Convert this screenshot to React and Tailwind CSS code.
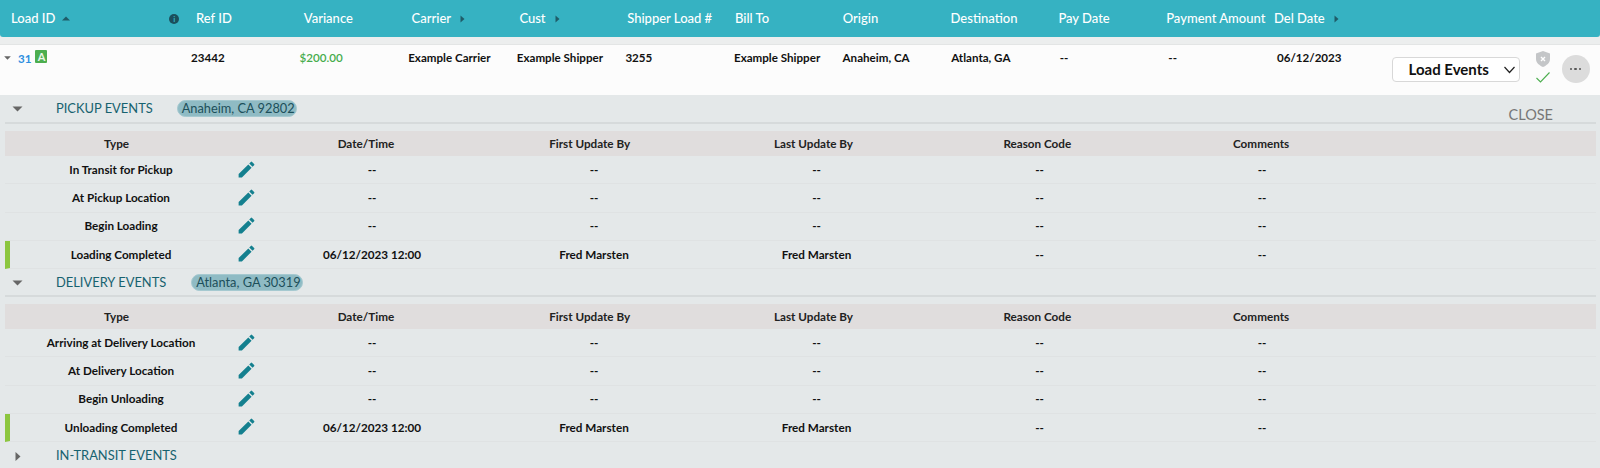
import { MdEdit } from 'react-icons/md';

const headers = [
  { label: 'Ref ID' },
  { label: 'Variance' },
  { label: 'Carrier', arrow: true },
  { label: 'Cust', arrow: true },
  { label: 'Shipper Load #' },
  { label: 'Bill To' },
  { label: 'Origin' },
  { label: 'Destination' },
  { label: 'Pay Date' },
  { label: 'Payment Amount' },
  { label: 'Del Date', arrow: true },
];

const values = ['23442', '$200.00', 'Example Carrier', 'Example Shipper', '3255', 'Example Shipper', 'Anaheim, CA', 'Atlanta, GA', '--', '--', '06/12/2023'];

// header cells and body cells don't line up in the original, so two sets of tracks
const headColumns = 'grid grid-cols-[223px_26px_223.8px_223.8px_223.8px_223.8px_223.8px_1fr] items-center text-center';
const rowColumns = 'grid grid-cols-[222px_29px_222px_222px_223px_223px_222px_1fr] items-center text-center';

function TriangleRight({ className }) {
  return (
    <svg viewBox="0 0 6 10" className={className} fill="currentColor">
      <path d="M0.5 0.5 L5.5 5 L0.5 9.5 Z" />
    </svg>
  );
}

function TriangleDown({ className }) {
  return (
    <svg viewBox="0 0 10 6" className={className} fill="currentColor">
      <path d="M0 0.5 L10 0.5 L5 5.5 Z" />
    </svg>
  );
}

function EventRow({ name, date, user, done, height }) {
  return (
    <div className={`${rowColumns} border-b border-[#dfe2e3] text-[11.7px] font-bold text-[#111] ${height} ${done ? 'border-l-[5px] border-l-[#8cc63f]' : 'pl-[5px]'}`}>
      <div>{name}</div>
      <div className="-mt-[1px] flex justify-center">
        <MdEdit className="text-[21px] text-[#14808f]" />
      </div>
      <div>{date || '--'}</div>
      <div>{user || '--'}</div>
      <div>{user || '--'}</div>
      <div>--</div>
      <div>--</div>
      <div />
    </div>
  );
}

function EventSection({ title, place, pillClass, showClose, rows, headHeight }) {
  return (
    <div>
      <div className={`flex items-start ${headHeight} border-b-2 border-[#d6dadb] pl-[7px]`}>
        <TriangleDown className="mt-[11px] h-[6px] w-[11px] text-[#666]" />
        <div className="ml-[33px] mt-[2px] whitespace-nowrap text-[12.9px] leading-[22px] text-[#17626f]">{title}</div>
        <div className={`mt-[5px] h-[17px] whitespace-nowrap rounded-full border border-[#a5c9d0] bg-[#8fbbc4] text-[12.8px] leading-[14px] text-[#1c4f5a] ${pillClass}`}>
          {place}
        </div>
        {showClose && <div className="ml-auto mr-[43px] mt-[10px] text-[14.5px] leading-5 text-[#777]">CLOSE</div>}
      </div>
      <div className={`${headColumns} mt-[7px] h-[25px] bg-[#e0dddd] text-[11.7px] font-bold text-[#222]`}>
        <div>Type</div>
        <div />
        <div>Date/Time</div>
        <div>First Update By</div>
        <div>Last Update By</div>
        <div>Reason Code</div>
        <div>Comments</div>
        <div />
      </div>
      {rows.map((row) => (
        <EventRow key={row.name} {...row} height="h-[28.25px]" />
      ))}
    </div>
  );
}

export default function App() {
  return (
    <div className="h-[468px] w-[1600px] overflow-hidden bg-[#e4e8e9] font-['Lato',sans-serif]">
      <div className="flex h-[37px] items-center rounded-b-[3px] bg-[#36b2c2] pl-[11px] text-[13px] font-medium text-white">
        <div className="flex w-[185px] items-center">
          <span>Load ID</span>
          <TriangleDown className="ml-[7px] h-[5px] w-[8px] rotate-180 text-[#1f5c68]" />
          <span className="ml-[99px] flex h-[10px] w-[10px] items-center justify-center rounded-full bg-[#1b4f5c] text-[8px] font-bold leading-none text-[#36b2c2]">i</span>
        </div>
        {headers.map((h) => (
          <div key={h.label} className="flex w-[107.8px] shrink-0 items-center whitespace-nowrap">
            <span>{h.label}</span>
            {h.arrow && <TriangleRight className="ml-[9px] h-[8px] w-[5px] text-[#1f5c68]" />}
          </div>
        ))}
      </div>

      <div className="h-[7px] bg-[#eceeee]" />

      <div className="flex h-[51px] border-t border-[#e3e5e5] bg-[#fcfcfc] text-[11.6px] font-bold text-[#111]">
        <div className="flex w-[191px] items-start pl-[4px] pt-[5px]">
          <TriangleDown className="mt-[6px] h-[4px] w-[7px] text-[#666]" />
          <span className="ml-[7px] text-[#2e8fe0]">31</span>
          <span className="ml-[4px] flex h-[13px] w-[12px] items-center justify-center rounded-[1px] bg-[#4cae4f] text-[11px] leading-none text-[#e8f5e8]">A</span>
        </div>
        {values.map((v, i) => (
          <div key={i} className={`w-[108.6px] shrink-0 whitespace-nowrap pt-[4px] ${i === 1 ? 'font-semibold text-[#46ac4c]' : ''}`}>
            {v}
          </div>
        ))}
        <div className="ml-[6px] mt-[12px] flex h-[25px] w-[128px] items-center justify-between rounded-[4px] border border-[#d8d8d8] bg-white pl-[16px] pr-[3px] text-[15px] font-bold text-[#111]">
          <span>Load Events</span>
          <svg viewBox="0 0 12 8" className="h-[8px] w-[13px]" fill="none" stroke="#222" strokeWidth="1.2">
            <path d="M1 1 L6 6.5 L11 1" />
          </svg>
        </div>
        <div className="ml-[15px] flex w-[16px] flex-col items-center pt-[6px]">
          <svg viewBox="0 0 14 16" className="h-[16px] w-[14px]">
            <path d="M7 0 L14 2.5 V8 C14 12 10.5 14.5 7 16 C3.5 14.5 0 12 0 8 V2.5 Z" fill="#c4c6c8" />
            <path d="M5 6 L9 10 M9 6 L5 10" stroke="#fff" strokeWidth="1.4" />
          </svg>
          <svg viewBox="0 0 14 11" className="mt-[5px] h-[11px] w-[14px]" fill="none" stroke="#4cae4f" strokeWidth="1.1">
            <path d="M0.5 6 L4.5 10 L13.5 0.5" />
          </svg>
        </div>
        <div className="ml-[11px] mt-[10px] flex h-[28px] w-[28px] items-center justify-center gap-[2px] rounded-full bg-[#dcdcdc]">
          <span className="h-[2.5px] w-[2.5px] rounded-full bg-[#555]" />
          <span className="h-[2.5px] w-[2.5px] rounded-full bg-[#555]" />
          <span className="h-[2.5px] w-[2.5px] rounded-full bg-[#555]" />
        </div>
      </div>

      <div className="pl-[5px] pr-[4px]">
        <EventSection
          title="PICKUP EVENTS"
          place="Anaheim, CA 92802"
          pillClass="ml-[24px] w-[120px] pl-[4px]"
          showClose
          headHeight="h-[29px]"
          rows={[
            { name: 'In Transit for Pickup' },
            { name: 'At Pickup Location' },
            { name: 'Begin Loading' },
            { name: 'Loading Completed', date: '06/12/2023 12:00', user: 'Fred Marsten', done: true },
          ]}
        />
        <EventSection
          title="DELIVERY EVENTS"
          place="Atlanta, GA 30319"
          pillClass="ml-[25px] w-[112px] pl-[4px]"
          headHeight="h-[28px]"
          rows={[
            { name: 'Arriving at Delivery Location' },
            { name: 'At Delivery Location' },
            { name: 'Begin Unloading' },
            { name: 'Unloading Completed', date: '06/12/2023 12:00', user: 'Fred Marsten', done: true },
          ]}
        />
        <div className="flex h-[28px] items-center pl-[10px]">
          <TriangleRight className="h-[11px] w-[6px] text-[#666]" />
          <div className="ml-[35px] text-[12.9px] text-[#17626f]">IN-TRANSIT EVENTS</div>
        </div>
      </div>
    </div>
  );
}
